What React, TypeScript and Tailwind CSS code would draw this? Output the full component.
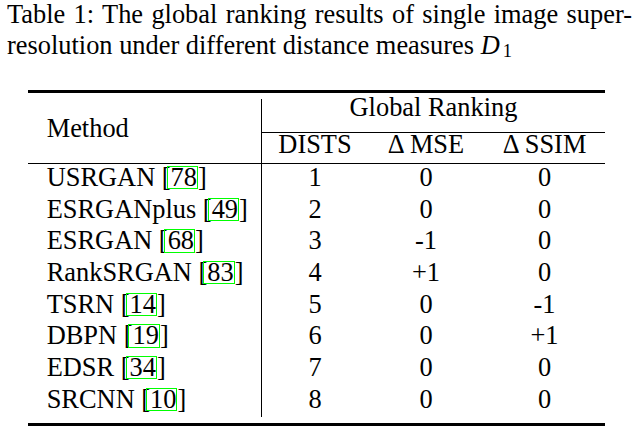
import React from "react";

const rows: [string, string, string, string, string][] = [
  ["USRGAN", "78", "1", "0", "0"],
  ["ESRGANplus", "49", "2", "0", "0"],
  ["ESRGAN", "68", "3", "-1", "0"],
  ["RankSRGAN", "83", "4", "+1", "0"],
  ["TSRN", "14", "5", "0", "-1"],
  ["DBPN", "19", "6", "0", "+1"],
  ["EDSR", "34", "7", "0", "0"],
  ["SRCNN", "10", "8", "0", "0"],
];

export default function App() {
  return (
    <div className="w-[637px] h-[438px] overflow-hidden bg-white text-black [font-family:Liberation_Serif] text-[26.4px]">
      <div className="-mt-[1px] pl-[7px] pr-[5px] leading-[31px]">
        <div className="whitespace-nowrap text-justify [text-align-last:justify]">
          Table 1: The global ranking results of single image super-
        </div>
        <div className="whitespace-nowrap">
          resolution under different distance measures <span className="italic">D</span>
          <sub className="text-[18.5px] bottom-[-3px] ml-[3px]">1</sub>
        </div>
      </div>

      <div className="ml-[28px] w-[577px] mt-[29px]">
        <div className="h-[3px] bg-black" />

        <div className="flex h-[71px] border-b border-black">
          <div className="w-[233px] pl-[18.7px] flex items-center leading-[31px]">Method</div>
          <div className="w-px bg-black mt-[6px]" />
          <div className="flex-1 flex flex-col">
            <div className="h-[39px] leading-[29.6px] text-center">Global Ranking</div>
            <div className="h-[31px] border-t border-black grid grid-cols-[106px_116px_121px] leading-[22.8px] text-center">
              <div>DISTS</div>
              <div>Δ MSE</div>
              <div>Δ SSIM</div>
            </div>
          </div>
        </div>

        <div className="grid grid-cols-[233px_1px_106px_116px_121px] auto-rows-[31.66px] leading-[27.66px]">
          <div className="col-start-2 row-start-1 row-span-8 bg-black" />
          {rows.map(([name, cite, d, m, s]) => (
            <React.Fragment key={name}>
              <div className="pl-[18.7px] whitespace-nowrap">
                {name} [
                <span className="inline-block -ml-[4px] pl-[3px] pr-0 border border-[#00ff00] leading-[21.3px]">{cite}</span>]
              </div>
              <div className="text-center">{d}</div>
              <div className="text-center">{m}</div>
              <div className="text-center">{s}</div>
            </React.Fragment>
          ))}
        </div>

        <div className="mt-[6px] h-[3px] bg-black" />
      </div>
    </div>
  );
}
